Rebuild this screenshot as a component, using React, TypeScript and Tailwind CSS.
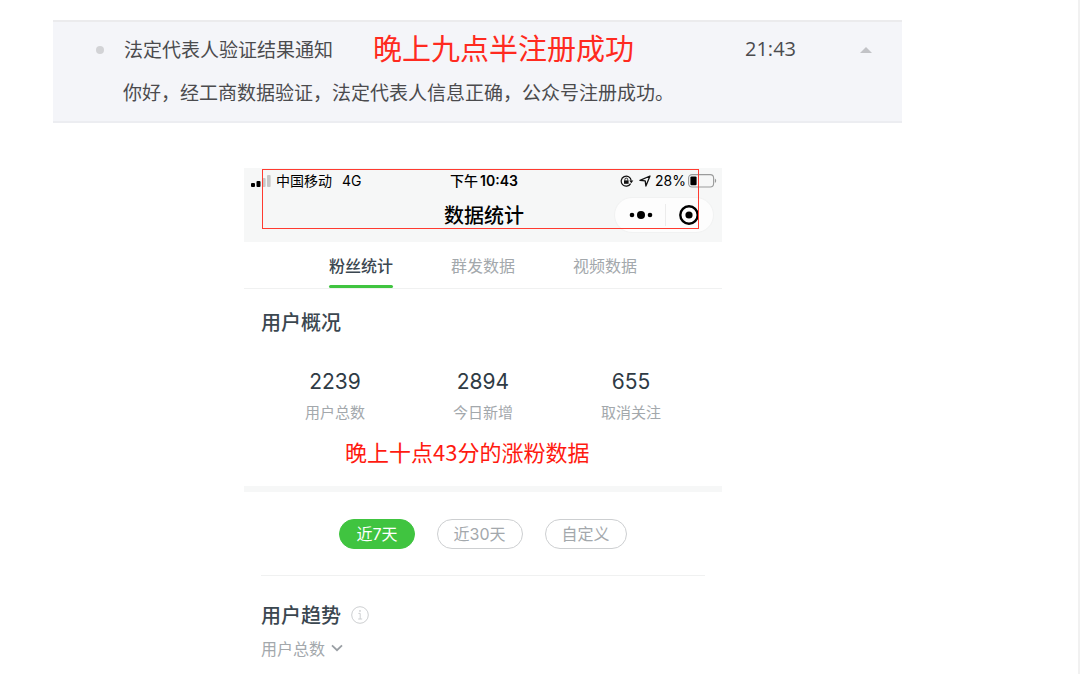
import React from "react";

const STATS = [
  { value: "2239", label: "用户总数" },
  { value: "2894", label: "今日新增" },
  { value: "655", label: "取消关注" },
];

function Notice() {
  return (
    <section className="mx-[53px] max-w-[849px] border-y-2 border-b-[#ecedf1] border-t-[#ebebed] bg-[#f4f5f9] pr-[30px] pl-[43px] text-[#4b4b4e]">
      <header className="flex h-[56px] items-center">
        <span className="size-2 rounded-full bg-[#d2d3d6]" />
        <h2 className="ml-[20px] pb-[2px] text-[19px] leading-7">法定代表人验证结果通知</h2>
        <strong className="ml-[40px] pb-[6px] text-[29px] leading-9 font-normal text-[#ff2a20]">
          晚上九点半注册成功
        </strong>
        <time className="mr-[64px] ml-auto pb-[2px] font-['Open_Sans',sans-serif] text-[20px] leading-7">21:43</time>
        <button type="button" aria-label="收起" className="flex w-[12px] justify-center">
          <svg viewBox="0 0 12 6" className="h-[6px] w-[12px]" fill="#c2c3c7">
            <path d="M0 6L6 0L12 6Z" />
          </svg>
        </button>
      </header>
      <p className="pb-[15px] pl-[27px] text-[19px] leading-7">
        你好，经工商数据验证，法定代表人信息正确，公众号注册成功。
      </p>
    </section>
  );
}

function SignalIcon() {
  return (
    <svg viewBox="0 0 20 12" className="h-3 w-5">
      <rect x="0" y="8" width="4" height="4" rx="1" fill="#000" />
      <rect x="5.5" y="6" width="4" height="6" rx="1" fill="#000" />
      <rect x="11" y="3" width="3.6" height="9" rx="1" fill="#c6c7c7" />
      <rect x="16" y="0" width="3.6" height="12" rx="1" fill="#c6c7c7" />
    </svg>
  );
}

function RotationLockIcon() {
  return (
    <svg viewBox="0 0 14 12" className="h-3 w-[14px]" fill="none" stroke="#111" strokeWidth="1.2">
      <path d="M10.6 8.6A5 5 0 1 1 11.2 5.6" />
      <path d="M9.3 5.6H13.3L11.3 8.2Z" fill="#111" stroke="none" />
      <rect x="4" y="5.4" width="4.6" height="3.4" fill="#111" stroke="none" />
      <path d="M4.9 5.6V4.5A1.4 1.4 0 0 1 7.7 4.5V5.6" strokeWidth="0.9" />
    </svg>
  );
}

function LocationIcon() {
  return (
    <svg viewBox="0 0 12 12" className="size-3" fill="none" stroke="#111" strokeWidth="1.3" strokeLinejoin="round">
      <path d="M11 1L1 5.4L6.2 5.9L6.9 11Z" />
    </svg>
  );
}

function BatteryIcon() {
  return (
    <svg viewBox="0 0 29 14" className="h-[14px] w-[29px]">
      <rect x="0.6" y="0.6" width="25" height="12.4" rx="3.4" fill="none" stroke="#9a9b9b" strokeWidth="1.1" />
      <rect x="2.4" y="2.4" width="6.2" height="8.8" rx="1.2" fill="#000" />
      <path d="M26.9 4.6C28.6 5.4 28.6 8.2 26.9 9Z" fill="#9a9b9b" />
    </svg>
  );
}

function PhoneHeader() {
  return (
    <header className="relative bg-[#f6f7f7] pr-[5px] pl-[7px] text-black">
      <div className="grid h-[26px] grid-cols-[1fr_auto_1fr] items-center text-[14px] leading-5">
        <div className="flex items-center">
          <SignalIcon />
          <span className="ml-[5px] pb-[2px]">中国移动</span>
          <span className="ml-[10px] font-[Inter]">4G</span>
        </div>
        <div className="flex items-center font-medium">
          <span className="pb-[2px]">下午</span>
          <span className="ml-[2px] font-[Inter] font-semibold">10:43</span>
        </div>
        <div className="flex items-center justify-end">
          <RotationLockIcon />
          <span className="mr-[4px] ml-[5px] flex"><LocationIcon /></span>
          <span className="mr-[2px] font-[Inter]">28%</span>
          <BatteryIcon />
        </div>
      </div>
      <div className="grid h-[48px] grid-cols-[1fr_auto_1fr] items-start">
        <h1 className="col-start-2 pt-[7px] text-[20px] leading-7 font-medium">数据统计</h1>
        <div className="mt-[3px] mr-[3px] flex h-[36px] w-[100px] items-center justify-self-end rounded-full border border-[#f1f2f2] bg-[#fdfdfd]">
          <button type="button" aria-label="更多" className="flex flex-1 justify-center pl-[2px]">
            <svg viewBox="0 0 24 10" className="h-[10px] w-6">
              <circle cx="3" cy="5" r="2.3" />
              <circle cx="12" cy="5" r="4" />
              <circle cx="21" cy="5" r="2.3" />
            </svg>
          </button>
          <span className="h-[22px] w-px bg-[#ececec]" />
          <button type="button" aria-label="关闭" className="flex flex-1 justify-center">
            <svg viewBox="0 0 20 20" className="size-5">
              <circle cx="10" cy="10" r="8.7" fill="none" stroke="#000" strokeWidth="2.4" />
              <circle cx="10" cy="10" r="3.6" />
            </svg>
          </button>
        </div>
      </div>
      <div className="pointer-events-none absolute top-px right-[23px] bottom-[13px] left-[18px] border border-[#ff3b30]" />
    </header>
  );
}

function Tabs() {
  return (
    <nav className="flex h-[47px] justify-center gap-[58px] border-b border-[#f0f1f1] text-[16px] leading-6 text-[#a3a8ac]">
      <a href="#fans" className="flex flex-col justify-between pt-[11px] font-medium text-[#3b4750]">
        粉丝统计
        <span className="h-[3px] rounded-full bg-[#40c440]" />
      </a>
      <a href="#mass" className="pt-[11px]">群发数据</a>
      <a href="#video" className="pt-[11px]">视频数据</a>
    </nav>
  );
}

export default function App() {
  return (
    <main className="min-h-screen border-r-2 border-[#f1f1f1] bg-white pt-[20px] font-['Noto_Sans_CJK_SC',sans-serif]">
      <Notice />
      <div className="mt-[45px] ml-[244px] max-w-[478px]">
        <PhoneHeader />
        <Tabs />
        <section className="border-b-[6px] border-[#f6f7f7] px-[17px] pt-[19px] pb-[19px]">
          <h2 className="text-[20px] leading-7 font-medium text-[#3b4750]">用户概况</h2>
          <dl className="mt-[30px] grid grid-cols-3 text-center">
            {STATS.map((s) => (
              <div key={s.label} className="flex flex-col-reverse">
                <dt className="mt-[2px] text-[15px] leading-6 text-[#a3a8ac]">{s.label}</dt>
                <dd className="font-[Inter] text-[21px] leading-8 text-[#2f3b45]">{s.value}</dd>
              </div>
            ))}
          </dl>
          <p className="mt-[11px] pl-[84px] text-[22px] leading-8 text-[#ff1a10]">晚上十点43分的涨粉数据</p>
        </section>
        <div className="mx-[17px] flex justify-center gap-[22px] border-b border-[#f0f1f1] pt-[27px] pb-[26px] font-[Inter,'Noto_Sans_CJK_SC',sans-serif] text-[16px] leading-7 text-[#a3a8ac]">
          <button type="button" className="rounded-full border border-[#40c440] bg-[#40c440] px-4 text-white">近7天</button>
          <button type="button" className="rounded-full border border-[#cdcfd1] px-4">近30天</button>
          <button type="button" className="rounded-full border border-[#cdcfd1] px-4">自定义</button>
        </div>
        <section className="px-[17px] pt-[25px]">
          <div className="flex items-center gap-[10px]">
            <h2 className="text-[20px] leading-7 font-medium text-[#3b4750]">用户趋势</h2>
            <button type="button" aria-label="说明">
              <svg viewBox="0 0 18 18" className="size-[18px]" fill="none" stroke="#cdcfd1" strokeWidth="1">
                <circle cx="9" cy="9" r="8.3" />
                <path d="M7.4 7.4H9.2V13M7.2 13H11.2" />
                <circle cx="9" cy="4.9" r="0.9" fill="#cdcfd1" stroke="none" />
              </svg>
            </button>
          </div>
          <button type="button" className="mt-[7px] flex items-center gap-[6px] text-[16px] leading-6 text-[#a3a8ac]">
            用户总数
            <svg viewBox="0 0 12 8" className="h-2 w-3" fill="none" stroke="#9a9fa4" strokeWidth="1.8">
              <path d="M1 1.4L6 6.2L11 1.4" />
            </svg>
          </button>
        </section>
      </div>
    </main>
  );
}
